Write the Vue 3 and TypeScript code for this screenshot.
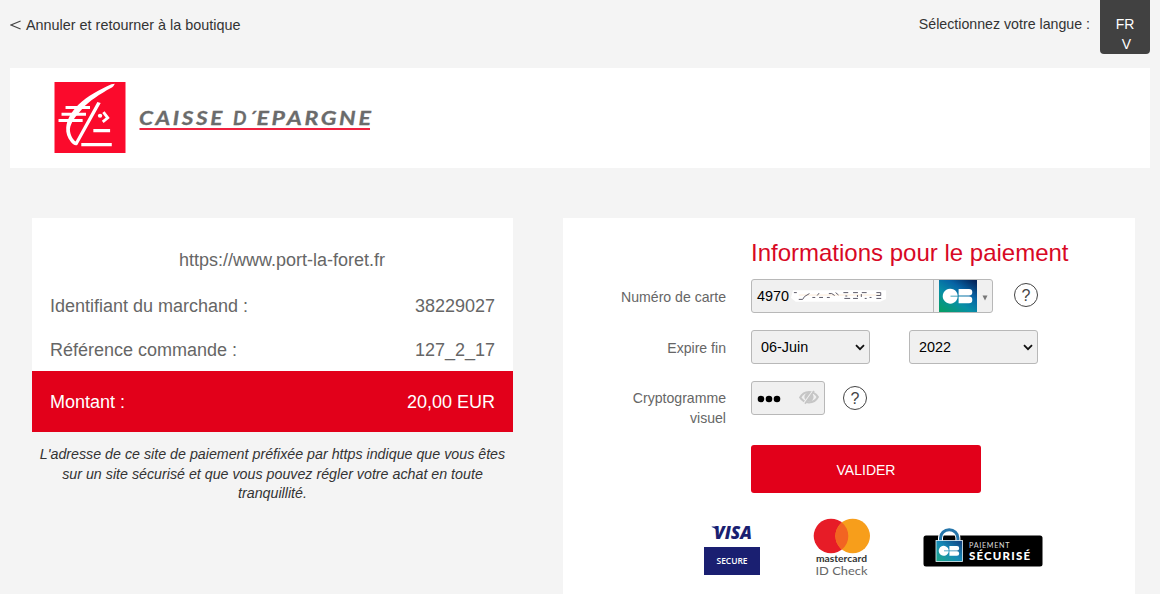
<script setup lang="ts">
import { ref } from 'vue'

interface SummaryRow {
  label: string
  value: string
}

const rows: SummaryRow[] = [
  { label: 'Identifiant du marchand :', value: '38229027' },
  { label: 'Référence commande :', value: '127_2_17' },
]

const month = ref('06-Juin')
const year = ref('2022')
</script>

<template>
  <div class="page">
    <header class="topbar">
      <a class="back"><svg class="lt" viewBox="0 0 11 10"><path d="M10.6 1 L1 5 L10.6 9" /></svg>Annuler et retourner à la boutique</a>
      <div class="lang">
        <span class="lang-label">Sélectionnez votre langue :</span>
        <button class="lang-btn"><span>FR</span><span class="vee">V</span></button>
      </div>
    </header>

    <div class="brand">
      <svg class="brand-mark" viewBox="0 0 212 212">
        <rect width="212" height="212" fill="#fb0a2c" />
        <path d="M180 5 C177 12 174 16 167 19 C138 35 103 57 82 81 C62 103 48 121 46 141 C46 157 55 172 63 178 L128 60 L138 63 L68 188 C62 191 54 186 49 179 C38 166 34 152 35 136 C37 110 52 87 72 67 C98 43 135 23 170 7 Z" fill="#fff" />
        <g stroke="#fff" fill="none">
          <path d="M33 76 H106 M21 96 H94 M12 115 H84" stroke-width="9" />
          <path d="M116 145 H166 M80 187 H171" stroke-width="10" />
          <path d="M146 90 L159 107 L144 119" stroke-width="8.5" />
        </g>
        <ellipse cx="136" cy="101" rx="6.5" ry="6" fill="#fff" />
      </svg>
      <svg class="brand-name" viewBox="0 0 234 28">
        <text x="0" y="19" textLength="86" lengthAdjust="spacingAndGlyphs">CAISSE</text>
        <text x="94" y="19">D</text>
        <text x="109.5" y="19">´</text>
        <text x="117.5" y="19" textLength="117" lengthAdjust="spacingAndGlyphs">EPARGNE</text>
        <rect x="0.5" y="22" width="230.5" height="2" fill="#f0213f" />
      </svg>
    </div>

    <main class="columns">
      <section class="left">
        <div class="summary">
          <p class="site">https://www.port-la-foret.fr</p>
          <div v-for="row in rows" :key="row.label" class="row">
            <span>{{ row.label }}</span><span>{{ row.value }}</span>
          </div>
        </div>
        <div class="total"><span>Montant :</span><span>20,00 EUR</span></div>
        <p class="notice">L'adresse de ce site de paiement préfixée par https indique que vous êtes<br />sur un site sécurisé et que vous pouvez régler votre achat en toute<br />tranquillité.</p>
      </section>

      <section class="payment">
        <h1>Informations pour le paiement</h1>
        <div class="field">
          <span class="label">Numéro de carte</span>
          <div class="card-box">
            <div class="number">
              <span>4970</span>
              <svg class="mask" viewBox="0 0 100 14">
                <path d="M2 1 H98 V10 L92 13 H5 L0 9 Z" fill="#fff" />
                <path d="M8 6 H92" stroke="#fdebd8" stroke-width="1" />
                <g stroke="#5c5966" stroke-width="1" fill="none">
                  <path d="M3 3.5 H6 M8 10.5 H12 L14 7.5 L19 4.5 M22 8.5 H25 M27 6.5 L29 4 M29 8.5 H33 M37 8.5 H40 M39 4.5 H42 L45 6.5 M46 3.5 L49 6 M54 3.5 H59 M55 9.5 H61 M56 7 H58 M64 3.5 H69 M64 9.5 H69 M68.5 6 V8 M73 3.5 H78 M72.5 5 V8 M76 9.5 H78 M81 8.5 H83 M88 3.5 H92.5 V6.5 H88 M88 9.5 H93" />
                </g>
              </svg>
            </div>
            <div class="scheme">
              <svg class="cb" viewBox="0 0 38 32">
                <defs>
                  <linearGradient id="cb-grad" x1="0.1" y1="1" x2="0.9" y2="0">
                    <stop offset="0" stop-color="#079d67" />
                    <stop offset="0.38" stop-color="#078fa6" />
                    <stop offset="0.68" stop-color="#0764a5" />
                    <stop offset="1" stop-color="#04245a" />
                  </linearGradient>
                </defs>
                <rect width="38" height="32" fill="url(#cb-grad)" />
                <path d="M18.7 15.7 H11.5 V16.6 H18.7 A7.5 7.5 0 1 1 18.7 15.7 Z" fill="#fff" />
                <path d="M19.6 9 H30 A3.3 3.3 0 0 1 30 15.6 H19.6 Z M19.6 16.6 H30 A3.3 3.3 0 0 1 30 23.2 H19.6 Z" fill="#fff" />
              </svg>
              <svg class="tri" viewBox="0 0 6 6"><path d="M0.5 0.5 H5.5 L3 5.5 Z" fill="#777" /></svg>
            </div>
          </div>
          <button class="help help-card">?</button>
        </div>

        <div class="field">
          <span class="label">Expire fin</span>
          <div class="select month">{{ month }}<svg class="chev" viewBox="0 0 10 7"><path d="M1 1.2 L5 5.2 L9 1.2" /></svg></div>
          <div class="select year">{{ year }}<svg class="chev" viewBox="0 0 10 7"><path d="M1 1.2 L5 5.2 L9 1.2" /></svg></div>
        </div>

        <div class="field crypto">
          <span class="label">Cryptogramme<br />visuel</span>
          <div class="cvv">
            <svg class="dots" viewBox="0 0 24 8"><circle cx="4" cy="4" r="3.3" /><circle cx="12" cy="4" r="3.3" /><circle cx="20" cy="4" r="3.3" /></svg>
            <svg class="eye" viewBox="0 0 20 16">
              <path d="M1.2 8.5 C3 5 6 3 10 3 C14 3 17 5 18.8 8 C17 11.4 14 13.3 10 13.3 C6 13.3 3 11.4 1.2 8.5 Z" fill="none" stroke="#c6c6c6" stroke-width="2.2" />
              <circle cx="10" cy="8" r="4.6" fill="#c6c6c6" />
              <path d="M5 14 L13.4 2.4" stroke="#f0f0f0" stroke-width="1.3" />
              <path d="M6 14.8 L15 2" stroke="#c6c6c6" stroke-width="1.7" />
            </svg>
          </div>
          <button class="help help-cvv">?</button>
        </div>

        <button class="submit">VALIDER</button>

        <div class="badges">
          <svg class="visa" viewBox="0 -5 56 57">
            <text class="visa-name" x="10" y="16" textLength="38" lengthAdjust="spacingAndGlyphs">VISA</text>
            <path d="M7.7 3.5 H13 L14.8 10.5 C13 7 11 5 7.7 4.1 Z" fill="#1a1f71" />
            <rect y="24" width="56" height="28" fill="#1a1f71" />
            <text class="visa-sub" x="12.5" y="40.5" textLength="31" lengthAdjust="spacingAndGlyphs">SECURE</text>
          </svg>
          <svg class="mc" viewBox="0 0 58 60">
            <circle cx="18" cy="18" r="17.3" fill="#e71c27" />
            <circle cx="39.7" cy="18" r="17.3" fill="#f79e1b" />
            <path d="M28.85 4.5 A17.3 17.3 0 0 1 28.85 31.5 A17.3 17.3 0 0 1 28.85 4.5 Z" fill="#f26422" />
            <text class="mc-name" x="3" y="44" textLength="51" lengthAdjust="spacingAndGlyphs">mastercard</text>
            <text class="mc-sub" x="2.5" y="57" textLength="52" lengthAdjust="spacingAndGlyphs">ID Check</text>
          </svg>
          <svg class="secure" viewBox="0 0 120 40">
            <defs>
              <linearGradient id="lock-grad" x1="0" y1="1" x2="1" y2="0">
                <stop offset="0" stop-color="#20a986" />
                <stop offset="0.5" stop-color="#168bb8" />
                <stop offset="1" stop-color="#123c7d" />
              </linearGradient>
            </defs>
            <rect x="0.5" y="7.5" width="119" height="31" rx="2.5" fill="#000" />
            <path d="M17.5 14 V10 A8.7 8.2 0 0 1 34.9 10 V14" fill="none" stroke="#fff" stroke-width="5" />
            <path d="M17.5 14 V10 A8.7 8.2 0 0 1 34.9 10 V14" fill="none" stroke="#2575aa" stroke-width="3" />
            <rect x="13" y="12.5" width="26.5" height="21" fill="url(#lock-grad)" stroke="#e7f5fa" stroke-width="0.8" />
            <path d="M25.7 22.5 H21 V23.2 H25.7 A5 5 0 1 1 25.7 22.5 Z" fill="#fff" />
            <path d="M26.4 18 H34 A2.2 2.2 0 0 1 34 22.4 H26.4 Z M26.4 23.3 H34 A2.2 2.2 0 0 1 34 27.7 H26.4 Z" fill="#fff" />
            <text class="sec-top" x="46" y="19.5" textLength="40.5" lengthAdjust="spacing">PAIEMENT</text>
            <text class="sec-main" x="46" y="31.5" textLength="61" lengthAdjust="spacing">SÉCURISÉ</text>
          </svg>
        </div>
      </section>
    </main>
  </div>
</template>

<style>
body {
  background: #f4f4f4;
  overflow: hidden;
}
</style>

<style scoped>
.page {
  box-sizing: border-box;
  width: 1160px;
  height: 594px;
  overflow: hidden;
  padding: 0 10px;
  background: #f4f4f4;
  color: #333;
  font-family: "Liberation Sans", Arial, sans-serif;
  font-size: 14.4px;
}
.page * { box-sizing: border-box; }
svg { display: block; flex: none; }
button { font-family: inherit; padding: 0; border: 0; }
p, h1 { margin: 0; }
.topbar { display: flex; justify-content: space-between; height: 68px; }
.back { display: flex; height: 50px; align-items: center; }
.lt { width: 11px; height: 10px; margin: 0 5px 0 0; }
.lt path { fill: none; stroke: #444; stroke-width: 1.1; }
.lang { display: flex; }
.lang-label { line-height: 48px; margin-right: 10px; font-size: 14.2px; }
.lang-btn {
  display: flex; flex-direction: column; align-items: center;
  width: 50px; height: 54px; padding-top: 14px;
  border-radius: 0 0 4px 4px; background: #414141; color: #fff;
  font-size: 14px; line-height: 20px;
}
.vee { margin-left: 3px; }
.brand { display: flex; height: 100px; background: #fff; padding: 14px 0 0 44px; }
.brand-mark { width: 72px; height: 71px; }
.brand-name { width: 234px; height: 28px; margin: 24px 0 0 13px; overflow: visible; }
.brand-name text {
  font-family: Lato, sans-serif; font-size: 19px; font-weight: 700;
  font-style: italic; letter-spacing: 2.2px; fill: #6b6b6b; stroke: #6b6b6b; stroke-width: 0.3;
}
.columns { display: flex; gap: 50px; padding: 50px 15px 0 22px; }
.left { width: 481px; }
.summary { height: 153px; padding: 30px 18px 0; background: #fff; color: #666; font-size: 18px; }
.site { height: 24px; line-height: 24px; text-align: center; padding-left: 19px; margin-bottom: 12px; }
.row { display: flex; justify-content: space-between; height: 44px; line-height: 44px; }
.total {
  display: flex; justify-content: space-between; align-items: center;
  height: 61px; padding: 2px 18px 0; background: #e2001a; color: #fff; font-size: 18px;
}
.notice { padding-top: 13px; text-align: center; font-style: italic; font-size: 14.25px; line-height: 19.5px; white-space: nowrap; }
.payment { width: 572px; height: 376px; background: #fff; padding-top: 20px; }
h1 { height: 30px; margin-left: 188px; line-height: 30px; font-size: 24px; font-weight: 400; color: #d80825; }
.field { display: flex; height: 51px; }
.field:first-of-type { margin-top: 11px; }
.label { width: 163px; margin-right: 25px; padding-top: 8px; text-align: right; font-size: 14.1px; line-height: 20px; color: #666; }
.card-box, .select, .cvv { height: 34px; border: 1px solid #b8b8b8; border-radius: 3px; background: #f0f0f0; color: #000; }
.card-box { display: flex; width: 242px; }
.number { display: flex; align-items: center; width: 181px; padding-left: 5px; }
.mask { width: 97px; height: 14px; margin-left: 2px; }
.scheme { display: flex; align-items: center; flex: 1; border-left: 1px solid #b8b8b8; padding-left: 5px; }
.cb { width: 38px; height: 32px; }
.tri { width: 6px; height: 6px; margin-left: 5px; margin-top: 3px; }
.help {
  width: 24px; height: 24px; margin-top: 4px; border: 1px solid #444; border-radius: 50%;
  background: #fff; color: #444; font-size: 16px; line-height: 23px;
}
.help-card { margin-left: 21px; }
.help-cvv { margin-left: 18px; margin-top: 5px; }
.select { display: flex; align-items: center; justify-content: space-between; padding: 0 4px 0 9px; }
.month { width: 119px; }
.year { width: 129px; margin-left: 39px; }
.chev { width: 10px; height: 7px; }
.chev path { fill: none; stroke: #111; stroke-width: 1.8; }
.crypto { height: 64px; }
.crypto .label { padding-top: 7px; }
.cvv { display: flex; align-items: center; width: 74px; padding-left: 5px; }
.dots { width: 24px; height: 8px; margin-top: 2px; }
.eye { width: 20px; height: 16px; margin-left: 18px; margin-top: -2px; }
.submit {
  display: block; width: 230px; height: 48px; margin-left: 188px; padding-top: 2px;
  border-radius: 3px; background: #e2001a; color: #fff; font-size: 14px;
}
.badges { display: flex; align-items: flex-start; margin-left: 141px; padding-top: 25px; }
.visa { width: 56px; height: 57px; overflow: visible; }
.mc { width: 58px; height: 60px; margin-left: 53px; }
.secure { width: 120px; height: 40px; margin-left: 52px; margin-top: 10px; }
.visa-name { font-family: "Open Sans", sans-serif; font-size: 17.5px; font-weight: 800; font-style: italic; fill: #1a1f71; }
.visa-sub { font-family: "Open Sans", sans-serif; font-size: 9px; font-weight: 600; fill: #fff; }
.mc-name { font-family: Lato, sans-serif; font-size: 9.6px; font-weight: 700; fill: #333; }
.mc-sub { font-family: Lato, sans-serif; font-size: 12.3px; fill: #666; }
.sec-top { font-family: Lato, sans-serif; font-size: 7.2px; fill: #ddd; }
.sec-main { font-family: Lato, sans-serif; font-size: 11.5px; font-weight: 900; fill: #fff; }
</style>
